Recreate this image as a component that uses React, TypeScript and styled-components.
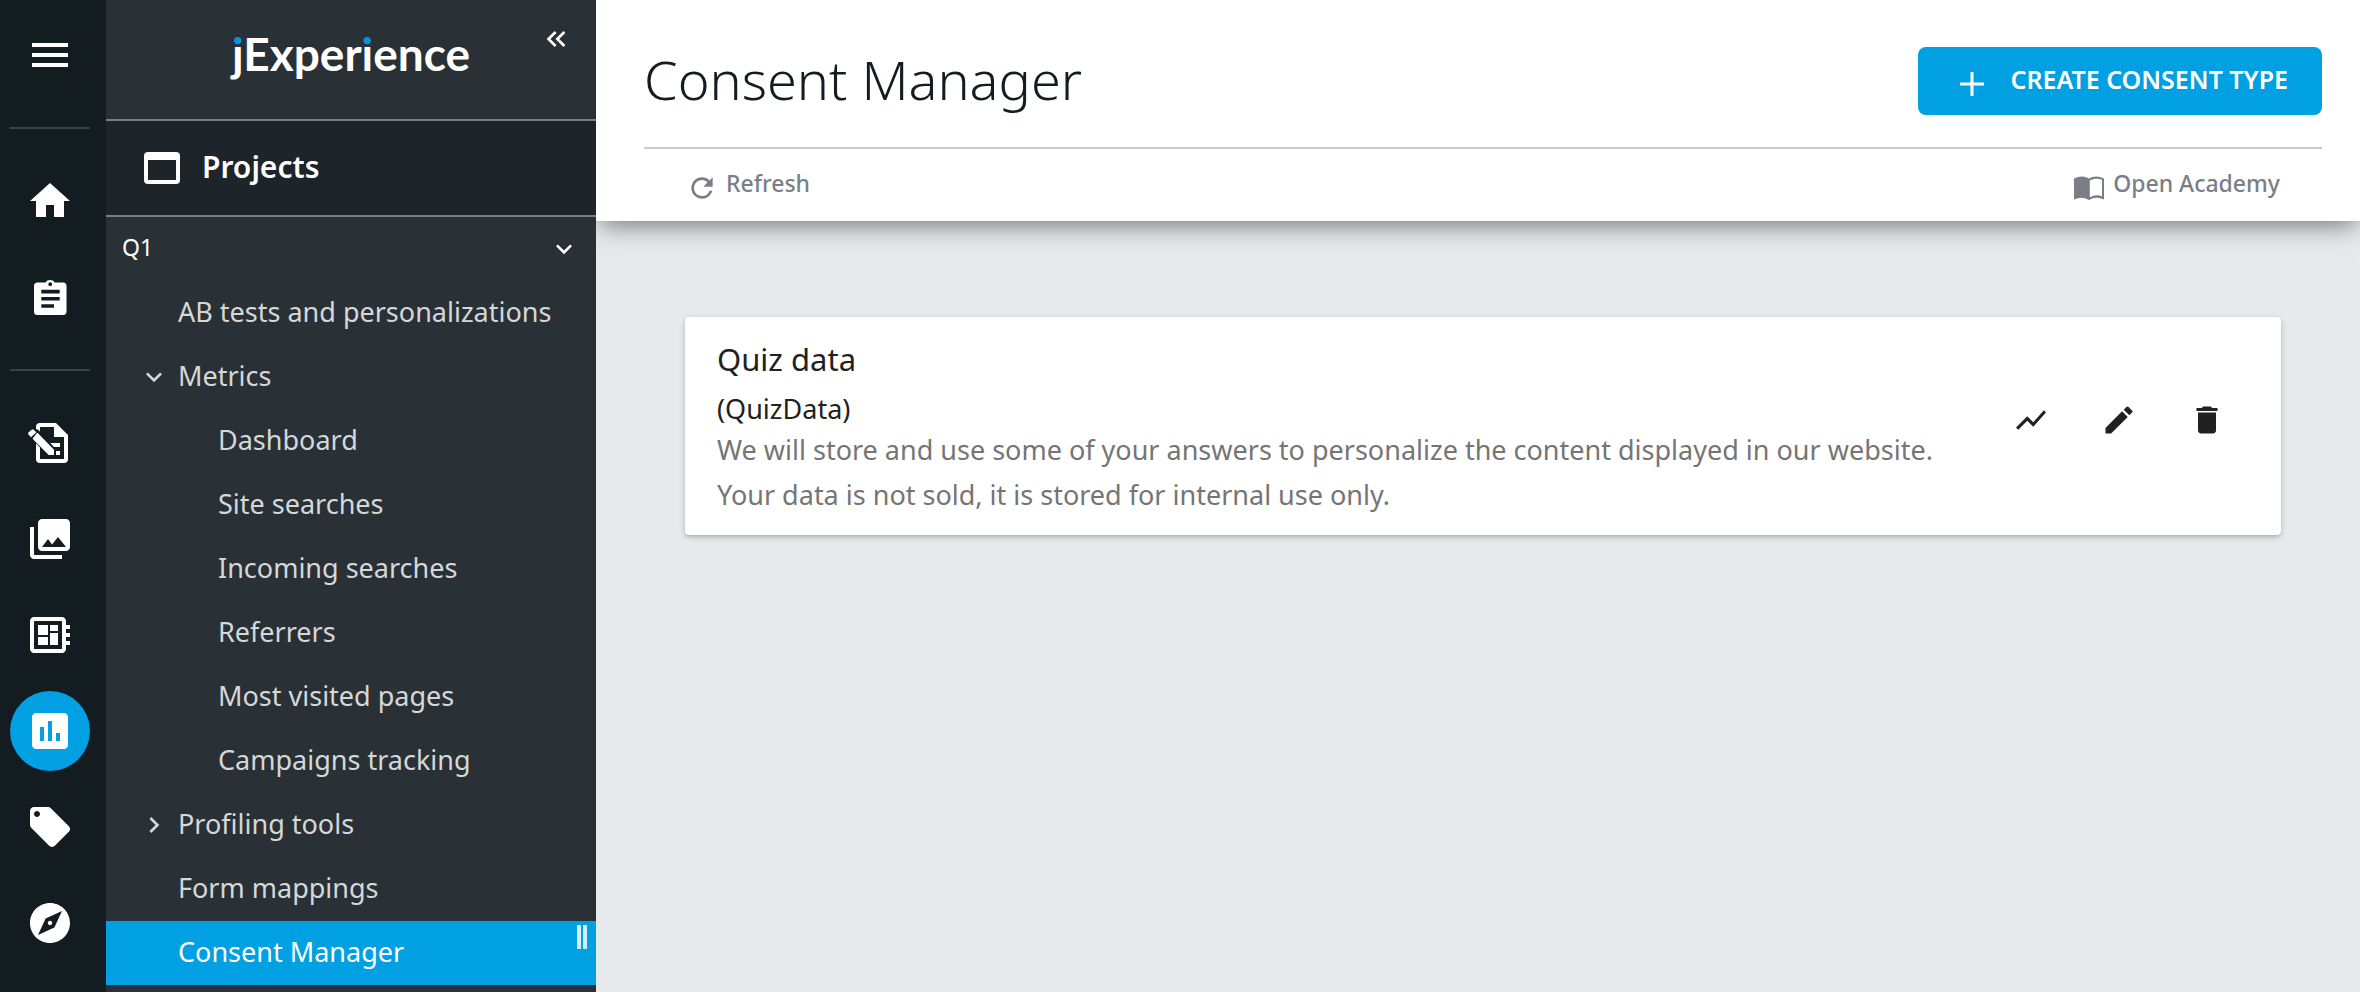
import React from 'react';
import styled, { createGlobalStyle, css } from 'styled-components';
import {
  MdMenu,
  MdHome,
  MdCollections,
  MdDeveloperBoard,
  MdAssessment,
  MdLocalOffer,
  MdExplore,
  MdExpandMore,
  MdChevronRight,
  MdKeyboardDoubleArrowLeft,
  MdRefresh,
  MdShowChart,
  MdCreate,
  MdDelete,
} from 'react-icons/md';

const color = {
  rail: '#131c21',
  sidebar: '#293136',
  sidebarDark: '#1d242a',
  rule: '#7a7f87',
  railRule: '#3a4148',
  accent: '#00a0e3',
  page: '#e6eaed',
  title: '#131c21',
  muted: '#7a7f87',
  hairline: '#c8cacf',
  cardText: '#212121',
  cardMuted: '#757575',
};

const GlobalStyle = createGlobalStyle`
  *, *::before, *::after { box-sizing: border-box; }
  body {
    margin: 0;
    background: ${color.page};
    font-family: 'Noto Sans', 'Open Sans', sans-serif;
  }
  button { font: inherit; color: inherit; background: none; border: 0; padding: 0; cursor: pointer; }
  a { color: inherit; text-decoration: none; }
  svg { display: block; flex: none; }
`;

const Shell = styled.div`
  display: flex;
  min-height: 100vh;
`;

/* Icon rail */
const Rail = styled.nav`
  flex: none;
  width: 106px;
  padding: 15px 16px 0 10px;
  background: ${color.rail};
  color: #fff;
  display: flex;
  flex-direction: column;
  gap: 16px;
`;

const railItem = css`
  width: 80px;
  height: 80px;
  border-radius: 50%;
  display: flex;
  align-items: center;
  justify-content: center;
`;

const RailButton = styled.button`
  ${railItem}
`;

const RailLink = styled.a<{ $active?: boolean }>`
  ${railItem}
  background: ${(p) => (p.$active ? color.accent : 'transparent')};
`;

const RailRule = styled.hr`
  width: 80px;
  height: 2px;
  margin: 16px 0;
  border: 0;
  background: ${color.railRule};
`;

/* Sidebar */
const Sidebar = styled.aside`
  position: relative;
  flex: none;
  width: 490px;
  background: ${color.sidebar};
  color: #d6d7d8;
`;

const Brand = styled.header`
  position: relative;
  display: flex;
  justify-content: center;
  padding: 24px 0 31px;
  border-bottom: 2px solid ${color.rule};
`;

const CollapseButton = styled.button`
  position: absolute;
  top: 23px;
  right: 24px;
  color: #fff;
`;

const Section = styled.h2`
  display: flex;
  align-items: center;
  gap: 16px;
  height: 96px;
  margin: 0;
  padding: 0 32px;
  border-bottom: 2px solid ${color.rule};
  background: ${color.sidebarDark};
  color: #fff;
  font-size: 30px;
  font-weight: 600;
`;

const SiteButton = styled.button`
  display: flex;
  align-items: center;
  justify-content: space-between;
  width: 100%;
  height: 64px;
  padding: 0 16px;
  color: #fff;
  font-size: 23px;
`;

const Menu = styled.ul`
  list-style: none;
  margin: 0;
  padding: 0;
`;

const MenuLink = styled.a<{ $level: number; $active?: boolean }>`
  display: flex;
  align-items: center;
  height: 64px;
  padding-left: ${(p) => (p.$level === 2 ? 72 : 32)}px;
  background: ${(p) => (p.$active ? color.accent : 'transparent')};
  color: ${(p) => (p.$active ? '#fff' : 'inherit')};
  font-size: 27px;
`;

const Marker = styled.span`
  flex: none;
  width: 40px;
`;

/* Text beside an icon, raised slightly above the icon's centre line */
const Label = styled.span`
  padding-bottom: 4px;
  white-space: nowrap;
`;

const ResizeHandle = styled.span`
  position: absolute;
  top: 925px;
  right: 9px;
  width: 10px;
  height: 24px;
  border: solid #d5eefa;
  border-width: 0 4px;
  cursor: col-resize;
`;

/* Main area */
const Main = styled.main`
  flex: 1;
  min-width: 0;
  overflow: hidden;
`;

const PageHeader = styled.header`
  position: relative;
  padding: 0 38px 0 48px;
  background: #fff;
  box-shadow: 0 8px 24px -4px rgba(0, 0, 0, 0.5);
`;

const TitleRow = styled.div`
  display: flex;
  align-items: flex-start;
  justify-content: space-between;
  height: 149px;
  padding-top: 47px;
  border-bottom: 2px solid ${color.hairline};
`;

const Title = styled.h1`
  margin: 0;
  color: ${color.title};
  font-size: 54px;
  font-weight: 300;
  line-height: 64px;
  white-space: nowrap;
`;

const LoweredIcon = styled.span`
  padding-top: 6px;
`;

const CreateButton = styled.button`
  display: flex;
  align-items: center;
  gap: 18px;
  height: 68px;
  padding: 0 34px;
  border-radius: 8px;
  background: ${color.accent};
  color: #fff;
  font-size: 25px;
  font-weight: 600;
  text-transform: uppercase;
`;

const Toolbar = styled.div`
  display: flex;
  align-items: center;
  justify-content: space-between;
  height: 72px;
  padding: 0 42px;
  color: ${color.muted};
  font-size: 23px;
  font-weight: 500;
`;

const toolbarItem = css`
  display: flex;
  align-items: center;
  gap: 8px;
`;

const ToolbarButton = styled.button`
  ${toolbarItem}
`;

const ToolbarLink = styled.a`
  ${toolbarItem}
`;

const Content = styled.section`
  padding: 96px 79px 96px 89px;
`;

const Card = styled.article`
  display: flex;
  align-items: center;
  justify-content: space-between;
  padding: 18px 30px 18px 32px;
  border-radius: 4px;
  background: #fff;
  box-shadow: 0 2px 6px rgba(0, 0, 0, 0.2), 0 2px 2px rgba(0, 0, 0, 0.08);
`;

const CardTitle = styled.h3`
  margin: 0 0 8px;
  color: ${color.cardText};
  font-size: 31px;
  font-weight: 400;
  line-height: 48px;
`;

const CardKey = styled.div`
  color: ${color.cardText};
  font-size: 27px;
  line-height: 36px;
`;

const CardText = styled.p`
  margin: 0;
  color: ${color.cardMuted};
  font-size: 27px;
  line-height: 45px;
`;

const CardActions = styled.div`
  display: flex;
  flex: none;
  padding-bottom: 12px;
  color: ${color.cardText};
`;

const IconButton = styled.button`
  display: flex;
  align-items: center;
  justify-content: center;
  width: 88px;
  height: 88px;
`;

const Logo = () => (
  <svg width="256" height="64" viewBox="0 0 256 64" role="img" aria-label="jExperience">
    <defs>
      <linearGradient id="dots" gradientUnits="userSpaceOnUse" x1="0" y1="0" x2="0" y2="64">
        <stop offset="0.33" stopColor="#0095dc" />
        <stop offset="0.33" stopColor="#fff" />
      </linearGradient>
    </defs>
    <text x="128" y="47" textAnchor="middle" fontFamily="Lato, sans-serif" fontSize="46" fontWeight="700" fill="#fff">
      <tspan fill="url(#dots)">j</tspan>Exper<tspan fill="url(#dots)">i</tspan>ence
    </text>
  </svg>
);

const WindowIcon = () => (
  <svg width="48" height="48" viewBox="0 0 24 24" fill="currentColor" fillRule="evenodd" aria-hidden="true">
    <path d="M5 4h14a2 2 0 0 1 2 2v12a2 2 0 0 1-2 2H5a2 2 0 0 1-2-2V6a2 2 0 0 1 2-2zm0 4v10h14V8z" />
  </svg>
);

const ClipboardIcon = () => (
  <svg width="48" height="48" viewBox="0 0 48 48" fill="currentColor" fillRule="evenodd" aria-hidden="true">
    <path d="M11.500 9.500H19.500a5 4 0 0 1 9.200 0H37a3.500 3.500 0 0 1 3.500 3.500V38.500a3.500 3.500 0 0 1-3.500 3.500H11.500a3.500 3.500 0 0 1-3.500-3.500V13a3.500 3.500 0 0 1 3.500-3.500zM24.200 9.300a1.900 1.900 0 1 0 .01 0zM15.300 16.800v3.600h18.400v-3.600zM15.300 24v3.600h18.400V24zM15.300 31.200v3.600H28v-3.600z" />
  </svg>
);

const ContentEditorIcon = () => (
  <svg width="48" height="48" viewBox="0 0 144 144" fill="currentColor" aria-hidden="true">
    <path
      fillRule="evenodd"
      d="M42 12H90L126 48V120a12 12 0 0 1-12 12H42a12 12 0 0 1-12-12V24a12 12 0 0 1 12-12zM42 24V120H114V54H84V24z"
    />
    <rect x="72" y="72" width="30" height="12" />
    <rect x="90" y="96" width="12" height="12" />
    <path d="M22 26l-14 12a4 4 0 0 0-1 5l10 16 50 53h19V86L38 34l-9-5z" fill={color.rail} />
    <path d="M8 40L17 32a5 5 0 0 1 6 0l8 8L15 55l-8-9a4 4 0 0 1 1-6z" />
    <path d="M36 43L84 92V108H68L21 61a3 3 0 0 1 0-4L32 43a3 3 0 0 1 4 0z" />
  </svg>
);

const PlusIcon = () => (
  <svg width="40" height="40" viewBox="0 0 40 40" stroke="currentColor" strokeWidth="3" aria-hidden="true">
    <path d="M8 20H32M20 8V32" />
  </svg>
);

const BookIcon = () => (
  <svg width="32" height="30" viewBox="-1 0 32 30" fill="currentColor" fillRule="evenodd" aria-hidden="true">
    <path d="M0 5.500Q8 1.500 15 5.500Q22 1.500 30 5.500V26.500Q22 23 15 27Q8 23 0 26.500zM15.800 7.500V24.200Q22 20.800 28 23.200V6.800Q21.500 4.200 15.800 7.500z" />
  </svg>
);

type Entry = { label: string; level: 1 | 2; marker?: 'open' | 'closed'; active?: boolean };

const entries: Entry[] = [
  { label: 'AB tests and personalizations', level: 1 },
  { label: 'Metrics', level: 1, marker: 'open' },
  { label: 'Dashboard', level: 2 },
  { label: 'Site searches', level: 2 },
  { label: 'Incoming searches', level: 2 },
  { label: 'Referrers', level: 2 },
  { label: 'Most visited pages', level: 2 },
  { label: 'Campaigns tracking', level: 2 },
  { label: 'Profiling tools', level: 1, marker: 'closed' },
  { label: 'Form mappings', level: 1 },
  { label: 'Consent Manager', level: 1, active: true },
];

export default function App() {
  return (
    <Shell>
      <GlobalStyle />
      <Rail aria-label="Applications">
        <RailButton aria-label="Menu"><MdMenu size={48} /></RailButton>
        <RailRule />
        <RailLink href="#home" aria-label="Home"><MdHome size={48} /></RailLink>
        <RailLink href="#tasks" aria-label="Tasks"><ClipboardIcon /></RailLink>
        <RailRule />
        <RailLink href="#pages" aria-label="Pages"><ContentEditorIcon /></RailLink>
        <RailLink href="#media" aria-label="Media"><MdCollections size={48} /></RailLink>
        <RailLink href="#boards" aria-label="Boards"><MdDeveloperBoard size={48} /></RailLink>
        <RailLink href="#jexperience" aria-label="Experience" aria-current="page" $active>
          <MdAssessment size={48} />
        </RailLink>
        <RailLink href="#tags" aria-label="Tags"><MdLocalOffer size={48} /></RailLink>
        <RailLink href="#explore" aria-label="Explore"><MdExplore size={48} /></RailLink>
      </Rail>

      <Sidebar>
        <Brand>
          <Logo />
          <CollapseButton aria-label="Collapse sidebar">
            <MdKeyboardDoubleArrowLeft size={32} />
          </CollapseButton>
        </Brand>
        <Section>
          <WindowIcon />
          <Label>Projects</Label>
        </Section>
        <SiteButton>
          <Label>Q1</Label>
          <MdExpandMore size={32} />
        </SiteButton>
        <Menu>
          {entries.map((e) => (
            <li key={e.label}>
              <MenuLink href="#" $level={e.level} $active={e.active} aria-current={e.active ? 'page' : undefined}>
                <Marker>
                  {e.marker === 'open' && <MdExpandMore size={32} />}
                  {e.marker === 'closed' && <MdChevronRight size={32} />}
                </Marker>
                <Label>{e.label}</Label>
              </MenuLink>
            </li>
          ))}
        </Menu>
        <ResizeHandle />
      </Sidebar>

      <Main>
        <PageHeader>
          <TitleRow>
            <Title>Consent Manager</Title>
            <CreateButton>
              <LoweredIcon><PlusIcon /></LoweredIcon>
              <Label>Create consent type</Label>
            </CreateButton>
          </TitleRow>
          <Toolbar>
            <ToolbarButton>
              <LoweredIcon><MdRefresh size={32} /></LoweredIcon>
              <Label>Refresh</Label>
            </ToolbarButton>
            <ToolbarLink href="#academy">
              <LoweredIcon><BookIcon /></LoweredIcon>
              <Label>Open Academy</Label>
            </ToolbarLink>
          </Toolbar>
        </PageHeader>
        <Content>
          <Card>
            <div>
              <CardTitle>Quiz data</CardTitle>
              <CardKey>(QuizData)</CardKey>
              <CardText>
                We will store and use some of your answers to personalize the content displayed in our website.
                <br />
                Your data is not sold, it is stored for internal use only.
              </CardText>
            </div>
            <CardActions>
              <IconButton aria-label="Statistics"><MdShowChart size={36} /></IconButton>
              <IconButton aria-label="Edit"><MdCreate size={36} /></IconButton>
              <IconButton aria-label="Delete"><MdDelete size={36} /></IconButton>
            </CardActions>
          </Card>
        </Content>
      </Main>
    </Shell>
  );
}
